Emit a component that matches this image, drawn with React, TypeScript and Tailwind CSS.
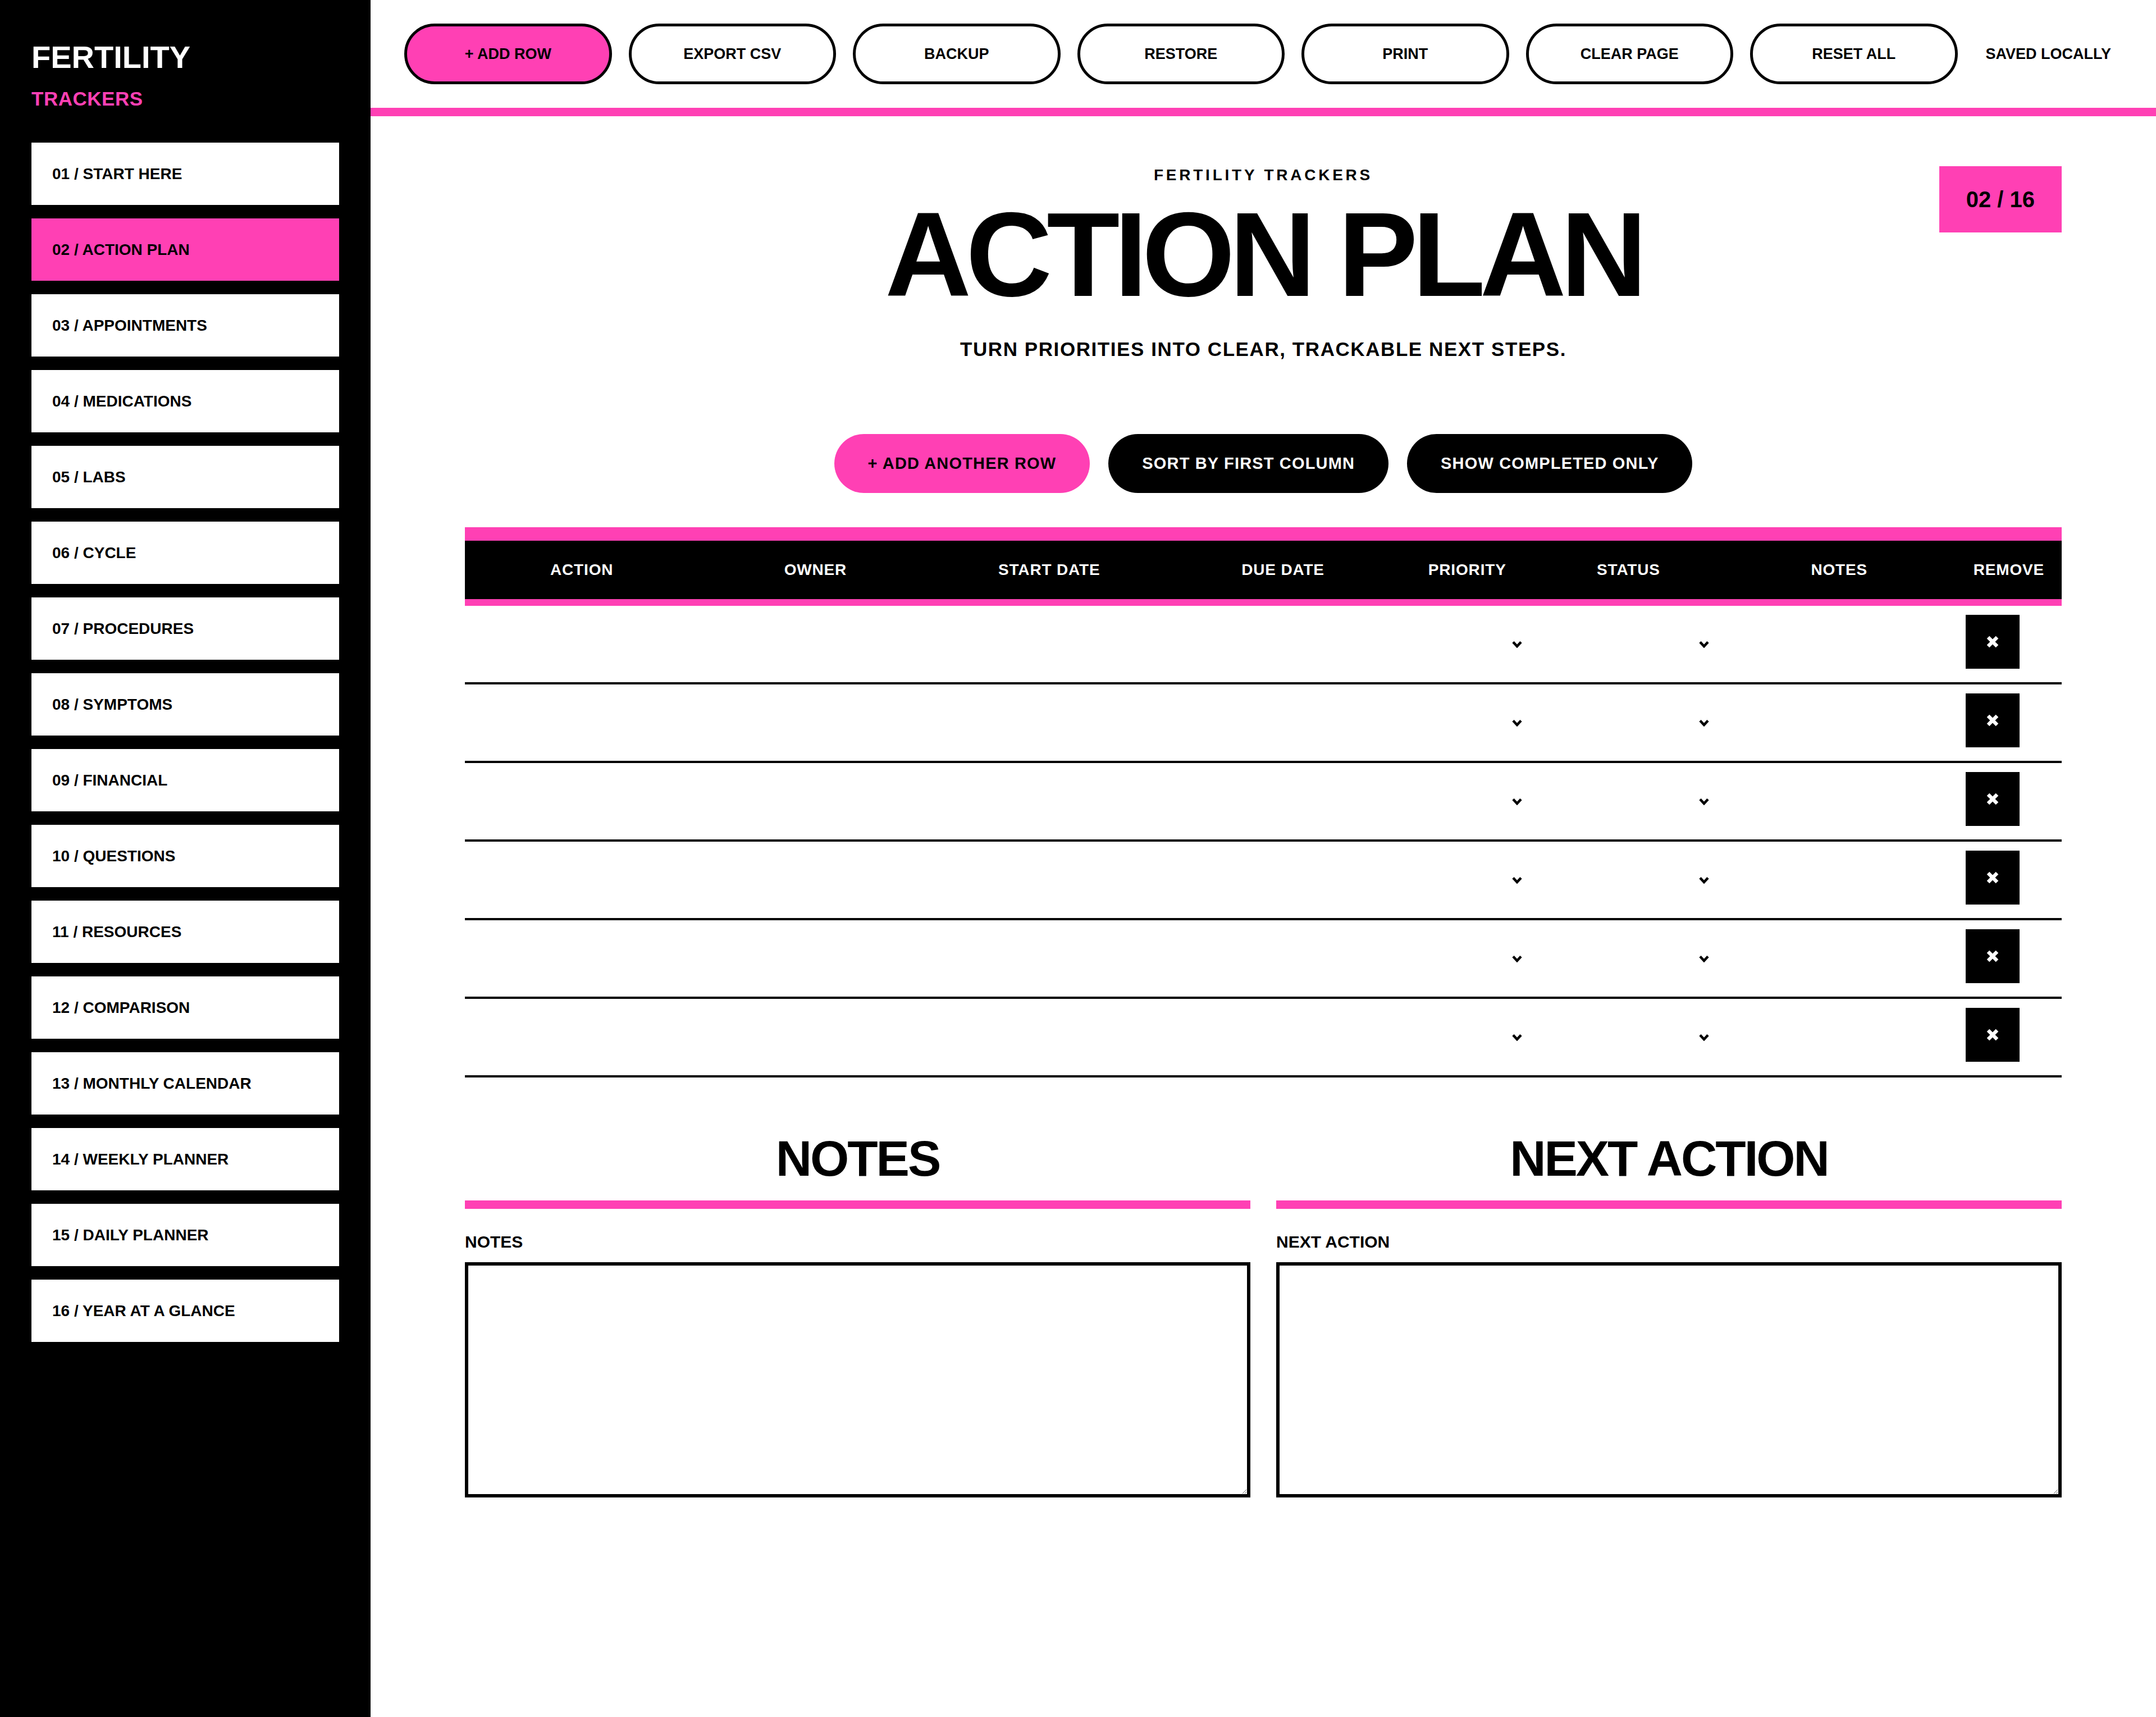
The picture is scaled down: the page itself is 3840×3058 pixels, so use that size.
import React from "react";

const NAV = [
  "01 / START HERE",
  "02 / ACTION PLAN",
  "03 / APPOINTMENTS",
  "04 / MEDICATIONS",
  "05 / LABS",
  "06 / CYCLE",
  "07 / PROCEDURES",
  "08 / SYMPTOMS",
  "09 / FINANCIAL",
  "10 / QUESTIONS",
  "11 / RESOURCES",
  "12 / COMPARISON",
  "13 / MONTHLY CALENDAR",
  "14 / WEEKLY PLANNER",
  "15 / DAILY PLANNER",
  "16 / YEAR AT A GLANCE",
];

const TOP = ["EXPORT CSV", "BACKUP", "RESTORE", "PRINT", "CLEAR PAGE", "RESET ALL"];

const COLS = ["ACTION", "OWNER", "START DATE", "DUE DATE", "PRIORITY", "STATUS", "NOTES", "REMOVE"];

function Chevron() {
  return (
    <svg width="18" height="13" viewBox="0 0 18 13" aria-hidden="true">
      <path d="M2 2.5 L9 10 L16 2.5" fill="none" stroke="#000" strokeWidth="4.6" strokeLinejoin="miter" />
    </svg>
  );
}

function XIcon() {
  return (
    <svg width="24" height="22" viewBox="0 0 24 22" aria-hidden="true">
      <path d="M4 3 L20 19 M20 3 L4 19" fill="none" stroke="#fff" strokeWidth="6.5" />
    </svg>
  );
}

export default function App() {
  return (
    <div className="flex min-h-screen bg-white text-black font-['Liberation_Sans',Arial,Helvetica,sans-serif]">
      <aside className="w-[660px] shrink-0 bg-black px-[56px] pt-[74px] pb-[60px]">
        <div className="text-[56px] leading-none font-bold text-white">FERTILITY</div>
        <div className="mt-[28px] text-[35px] leading-none font-bold text-[#ff40b4] tracking-[0.015em]">TRACKERS</div>
        <nav className="mt-[61px] flex flex-col gap-[24px]">
          {NAV.map((n, i) => (
            <div
              key={n}
              className={`flex h-[111px] items-center pl-[37px] text-[28px] font-bold ${
                i === 1 ? "bg-[#ff40b4]" : "bg-white"
              }`}
            >
              {n}
            </div>
          ))}
        </nav>
      </aside>

      <main className="min-w-0 flex-1">
        <header className="flex items-center gap-[30px] border-b-[15px] border-[#ff40b4] px-[60px] py-[42px]">
          <button className="flex h-[108px] flex-1 items-center justify-center rounded-full border-[5px] border-black bg-[#ff40b4] text-[27px] font-bold">
            + ADD ROW
          </button>
          {TOP.map((t) => (
            <button
              key={t}
              className="flex h-[108px] flex-1 items-center justify-center rounded-full border-[5px] border-black bg-white text-[27px] font-bold"
            >
              {t}
            </button>
          ))}
          <span className="px-[20px] text-[27px] font-bold whitespace-nowrap">SAVED LOCALLY</span>
        </header>

        <section className="px-[168px] pt-[89px] pb-[120px]">
          <div className="grid grid-cols-[1fr_auto_1fr]">
            <div />
            <div className="flex flex-col items-center">
              <div className="text-[28px] leading-[32px] font-bold tracking-[0.17em]">FERTILITY TRACKERS</div>
              <h1 className="mt-[19px] text-[213px] leading-none font-bold tracking-[-0.046em]">ACTION PLAN</h1>
              <p className="mt-[42px] text-[35px] leading-[40px] font-bold tracking-[0.045em]">
                TURN PRIORITIES INTO CLEAR, TRACKABLE NEXT STEPS.
              </p>
            </div>
            <div className="flex items-start justify-end">
              <div className="bg-[#ff40b4] px-[48px] py-[36px] text-[40px] leading-[46px] font-bold">02 / 16</div>
            </div>
          </div>

          <div className="mt-[131px] flex justify-center gap-[33px]">
            <button className="h-[105px] rounded-full bg-[#ff40b4] px-[60px] text-[29px] font-bold tracking-[0.04em] text-black">
              + ADD ANOTHER ROW
            </button>
            <button className="h-[105px] rounded-full bg-black px-[60px] text-[29px] font-bold tracking-[0.04em] text-white">
              SORT BY FIRST COLUMN
            </button>
            <button className="h-[105px] rounded-full bg-black px-[60px] text-[29px] font-bold tracking-[0.04em] text-white">
              SHOW COMPLETED ONLY
            </button>
          </div>

          <div className="mt-[61px]">
            <div className="grid h-[140px] grid-cols-[416fr_416fr_416fr_416fr_240fr_334fr_416fr_188fr] border-t-[24px] border-b-[12px] border-[#ff40b4] bg-black">
              {COLS.map((c) => (
                <div key={c} className="flex items-center justify-center text-[28px] font-bold tracking-[0.03em] text-white">
                  {c}
                </div>
              ))}
            </div>
            {Array.from({ length: 6 }).map((_, r) => (
              <div
                key={r}
                className="grid h-[140px] grid-cols-[416fr_416fr_416fr_416fr_240fr_334fr_416fr_188fr] border-b-4 border-black"
              >
                <div />
                <div />
                <div />
                <div />
                <div className="flex items-center justify-end pr-[22px]">
                  <Chevron />
                </div>
                <div className="flex items-center justify-end pr-[24px]">
                  <Chevron />
                </div>
                <div />
                <div className="pt-[16px] pl-[17px]">
                  <button className="flex h-[96px] w-[96px] items-center justify-center bg-black">
                    <XIcon />
                  </button>
                </div>
              </div>
            ))}
          </div>

          <div className="mt-[100px] grid grid-cols-2 gap-[46px]">
            {["NOTES", "NEXT ACTION"].map((h) => (
              <div key={h} className="flex flex-col">
                <h2 className="border-b-[15px] border-[#ff40b4] pb-[30px] text-center text-[89px] leading-none font-bold tracking-[-0.034em]">
                  {h}
                </h2>
                <label className="mt-[42px] text-[30px] leading-[34px] font-bold">{h}</label>
                <textarea className="mt-[19px] h-[419px] w-full resize border-[6px] border-black bg-white" />
              </div>
            ))}
          </div>
        </section>
      </main>
    </div>
  );
}
